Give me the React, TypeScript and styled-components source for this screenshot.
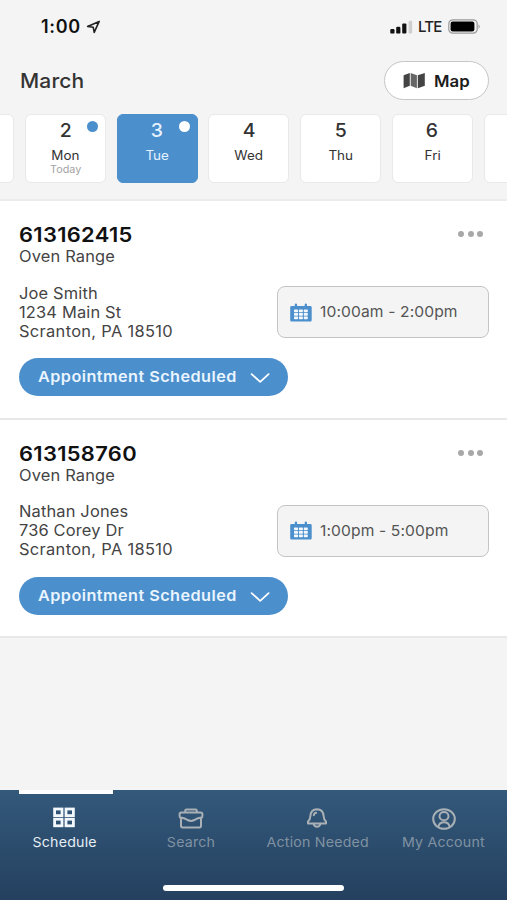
import React from "react";
import styled, { createGlobalStyle } from "styled-components";

const GlobalStyle = createGlobalStyle`
  *, *::before, *::after { box-sizing: border-box; }
  body {
    margin: 0;
    background: #f4f4f4;
    font-family: Inter, "Liberation Sans", sans-serif;
    color: #333;
  }
  button { font: inherit; color: inherit; margin: 0; padding: 0; border: 0; background: none; }
  h1, h2, p, address { margin: 0; font-style: normal; }
  svg { display: block; flex: none; }
`;

const Screen = styled.div`
  display: flex;
  flex-direction: column;
  width: 507px;
  height: 900px;
  overflow: hidden;
  background: #f4f4f4;
`;

const StatusBar = styled.div`
  display: flex;
  align-items: center;
  justify-content: space-between;
  height: 53px;
  padding: 0 26px 0 41px;
`;

const Clock = styled.div`
  display: flex;
  align-items: center;
  gap: 5px;
  font-size: 18px;
  line-height: 22px;
  font-weight: 600;
  letter-spacing: 0.7px;
  color: #111;
`;

const Signals = styled.div`
  display: flex;
  align-items: center;
  font-size: 15px;
  line-height: 20px;
  font-weight: 500;
  letter-spacing: -0.8px;
  color: #222;
`;

const Carrier = styled.span`
  margin: 1px 6.5px 0 5px;
`;

const Header = styled.header`
  display: flex;
  align-items: center;
  justify-content: space-between;
  height: 55px;
  padding: 0 18px 0 20px;
`;

const Month = styled.h1`
  font-size: 20px;
  line-height: 26px;
  font-weight: 500;
  letter-spacing: 0.15px;
  color: #333;
  transform: scaleX(1.05);
  transform-origin: left;
`;

const MapButton = styled.button`
  display: flex;
  align-items: center;
  gap: 8px;
  width: 105px;
  height: 39px;
  padding-left: 18px;
  border: 1px solid #c6c6c6;
  border-radius: 20px;
  background: #fff;
  font-size: 16px;
  line-height: 20px;
  font-weight: 600;
  color: #1c1c1c;
`;

const MapLabel = styled.span`
  transform: scaleX(1.05);
  transform-origin: left;
`;

const StripFrame = styled.div`
  overflow: hidden;
  border-bottom: 2px solid #ececec;
`;

const DayStrip = styled.div`
  display: flex;
  gap: 10.75px;
  width: 700px;
  height: 91px;
  margin-left: -67px;
  padding-top: 6px;
`;

const Day = styled.button<{ $active?: boolean }>`
  position: relative;
  display: flex;
  flex-direction: column;
  align-items: center;
  flex: none;
  width: 81px;
  height: 69px;
  border: 1px solid ${(p) => (p.$active ? "#4b8fcc" : "#e9e9e9")};
  border-radius: 6px;
  background: ${(p) => (p.$active ? "#4b8fcc" : "#fff")};
  color: ${(p) => (p.$active ? "#e6f2ff" : "#333")};
`;

const DayNumber = styled.span`
  margin-top: 3px;
  font-size: 18.5px;
  line-height: 24px;
  font-weight: 500;
  transform: scaleX(1.05);
`;

const DayName = styled.span`
  margin-top: 6px;
  font-size: 12.8px;
  line-height: 16px;
  transform: scaleX(1.05);
`;

const DayNote = styled.span`
  font-size: 10.2px;
  line-height: 10px;
  color: #a3a3a3;
  transform: scaleX(1.06);
`;

const Dot = styled.i<{ $active?: boolean }>`
  position: absolute;
  top: 6px;
  right: 6.5px;
  width: 11px;
  height: 11px;
  border-radius: 50%;
  background: ${(p) => (p.$active ? "#fff" : "#4b8fcc")};
`;

const Job = styled.article`
  display: flex;
  flex-direction: column;
  height: 218.5px;
  padding: 21px 18px 0 19px;
  border-bottom: 2px solid #e8e8e8;
  background: #fff;
`;

const JobTop = styled.div`
  display: flex;
  justify-content: space-between;
`;

const JobId = styled.h2`
  font-size: 20.3px;
  line-height: 26px;
  font-weight: 600;
  letter-spacing: 0.3px;
  color: #111;
  transform: scaleX(1.08);
  transform-origin: left;
`;

const MoreButton = styled.button`
  display: flex;
  align-items: center;
  gap: 3.4px;
  height: 24px;
  margin-right: 6px;
`;

const MoreDot = styled.i`
  width: 6px;
  height: 6px;
  border-radius: 50%;
  background: #a8a8a8;
`;

const Product = styled.p`
  margin-top: -1px;
  font-size: 15.5px;
  line-height: 20px;
  letter-spacing: 0.15px;
  color: #444;
  transform: scaleX(1.06);
  transform-origin: left;
`;

const Details = styled.div`
  display: flex;
  justify-content: space-between;
  align-items: flex-start;
  margin-top: 19px;
`;

const Address = styled.address`
  margin-top: -3px;
  padding-top: 0.5px;
  font-size: 15.5px;
  line-height: 19.2px;
  letter-spacing: 0.15px;
  color: #444;
  transform: scaleX(1.06);
  transform-origin: left;
`;

const CityLine = styled.div`
  letter-spacing: 0.3px;
`;

const TimeBox = styled.div`
  display: flex;
  align-items: center;
  gap: 8px;
  width: 212px;
  height: 52px;
  padding-left: 12px;
  border: 1px solid #c4c4c4;
  border-radius: 8px;
  background: #f4f4f4;
`;

const TimeRange = styled.span`
  font-size: 15px;
  line-height: 20px;
  letter-spacing: 0.12px;
  color: #555;
  transform: scaleX(1.04);
  transform-origin: left;
`;

const StatusButton = styled.button`
  display: flex;
  align-items: center;
  width: 269px;
  height: 38px;
  margin-top: 17px;
  padding-left: 18.5px;
  border-radius: 19px;
  background: #4b8fcc;
  text-align: left;
`;

const StatusLabel = styled.span`
  width: 212.5px;
  font-size: 15px;
  line-height: 20px;
  font-weight: 600;
  letter-spacing: 0.43px;
  color: #eaf5ff;
  transform: scaleX(1.08);
  transform-origin: left;
`;

const TabBar = styled.nav`
  display: flex;
  flex-direction: column;
  justify-content: space-between;
  align-items: center;
  height: 110px;
  margin-top: auto;
  padding-bottom: 9px;
  background: linear-gradient(#33597b, #25405f);
`;

const Tabs = styled.div`
  display: grid;
  grid-template-columns: repeat(4, 1fr);
  width: 100%;
  padding-left: 1px;
`;

const Tab = styled.button<{ $active?: boolean }>`
  display: flex;
  flex-direction: column;
  align-items: center;
  color: ${(p) => (p.$active ? "#f3f8fc" : "#a9b0b6")};
`;

const TabMark = styled.i<{ $active?: boolean }>`
  width: 94px;
  height: 4px;
  margin: 0 0 12px 4px;
  background: ${(p) => (p.$active ? "#fff" : "transparent")};
`;

const TabLabel = styled.span<{ $active?: boolean }>`
  margin-top: 3px;
  font-size: 13.5px;
  line-height: 18px;
  letter-spacing: 0.2px;
  white-space: nowrap;
  color: ${(p) => (p.$active ? "#e6eff6" : "#8092a2")};
  transform: scaleX(1.05);
`;

const HomeBar = styled.div`
  width: 181px;
  height: 6px;
  border-radius: 3px;
  background: #fff;
`;

const LocationIcon = () => (
  <svg width="15" height="14" viewBox="0 0 15 14" fill="none" stroke="#222" strokeWidth="1.6" strokeLinejoin="round">
    <path d="M13.2 1.4 L1.6 6.4 L7.2 7.2 L8.2 12.4 Z" />
  </svg>
);

const SignalIcon = () => (
  <svg width="23" height="14" viewBox="0 0 23 14" fill="#111">
    <rect x="0.3" y="9" width="4.2" height="4.6" rx="1.2" />
    <rect x="6.2" y="6.7" width="4.2" height="6.9" rx="1.2" />
    <rect x="12.2" y="3.5" width="4.2" height="10.1" rx="1" />
    <rect x="18.6" y="0.8" width="3.6" height="12.8" rx="1" fill="#cfcfcf" />
  </svg>
);

const BatteryIcon = () => (
  <svg width="33" height="15" viewBox="0 0 33 15">
    <rect x="0.8" y="0.8" width="28.4" height="13.4" rx="4" fill="none" stroke="#999" strokeWidth="1.2" />
    <rect x="2.6" y="2.6" width="23.8" height="9.8" rx="2.2" fill="#000" />
    <path d="M30.6 5.2 Q32.6 7.5 30.6 9.8 Z" fill="#888" />
  </svg>
);

const MapIcon = () => (
  <svg width="23" height="17" viewBox="0 0 23 17" fill="#444">
    <path d="M0.6 3.2 L6.8 0.9 V13.8 L0.6 16.2 Z" />
    <path d="M7.7 0.9 L13.9 3.2 V16.2 L7.7 13.8 Z" fill="#666" />
    <path d="M14.8 3.2 L21.8 0.9 V13.8 L14.8 16.2 Z" />
  </svg>
);

const CalendarIcon = () => (
  <svg width="22" height="19" viewBox="0 0 22 19">
    <path
      d="M1.6 3 H4.8 V1.4 Q4.8 0.6 5.9 0.6 Q7.1 0.6 7.1 1.4 V3 H14.7 V1.4 Q14.7 0.6 15.8 0.6 Q17 0.6 17 1.4 V3 H20.2 Q21.7 3 21.7 4.2 V17.2 Q21.7 18.4 20.4 18.4 H1.5 Q0.2 18.4 0.2 17.2 V4.2 Q0.2 3 1.6 3 Z"
      fill="#4b8fcc"
    />
    <g fill="#f4f8fc">
      {[6.4, 9.9, 13.4].map((y) =>
        [4, 8.9, 13.8].map((x) => <rect key={`${x}-${y}`} x={x} y={y} width="4" height="2.8" rx="0.6" />)
      )}
    </g>
  </svg>
);

const ChevronIcon = () => (
  <svg width="20" height="12" viewBox="0 0 20 12" fill="none" stroke="#fff" strokeWidth="1.8" strokeLinecap="round" strokeLinejoin="round">
    <path d="M1.6 3.2 L10.2 10.8 L18.6 3.2" />
  </svg>
);

const GridIcon = () => (
  <svg width="24" height="24" viewBox="0 0 24 24" fill="none" stroke="currentColor" strokeWidth="2.8">
    <rect x="2.6" y="3" width="7.4" height="6.6" />
    <rect x="14" y="3" width="7.4" height="6.6" />
    <rect x="2.6" y="13.2" width="7.4" height="6.6" />
    <rect x="14" y="13.2" width="7.4" height="6.6" />
  </svg>
);

const BriefcaseIcon = () => (
  <svg width="26" height="24" viewBox="0 0 26 24" fill="none" stroke="currentColor" strokeWidth="2" strokeLinejoin="round">
    <path d="M7.2 6.4 V4.7 Q7.2 3.4 8.5 3.4 H17.5 Q18.8 3.4 18.8 4.7 V6.4" />
    <path d="M3 12.2 Q1.6 11.6 1.6 10 V8.4 Q1.6 6.6 3.4 6.6 H22.6 Q24.4 6.6 24.4 8.4 V10 Q24.4 11.6 23 12.2" />
    <path d="M3 11.6 V19.8 Q3 21.4 4.6 21.4 H21.4 Q23 21.4 23 19.8 V11.6" />
    <path d="M3 11.4 Q7 12 9.6 14 Q13 15.8 16.4 14 Q19 12 23 11.4" />
  </svg>
);

const BellIcon = () => (
  <svg width="24" height="24" viewBox="0 0 24 24" fill="none" stroke="currentColor" strokeWidth="2" strokeLinecap="round" strokeLinejoin="round">
    <path d="M5.4 10 Q5.8 3.4 12 3.2 Q18.2 3.4 18.6 10 Q18.8 13.6 21 15.6 V17.4 H3 V15.6 Q5.2 13.6 5.4 10 Z" />
    <path d="M8.6 17.8 Q9.4 20.8 12 20.8 Q14.6 20.8 15.4 17.8" />
    <path d="M8.8 9.2 Q9.1 7 11.2 6.8" />
  </svg>
);

const AccountIcon = () => (
  <svg width="26" height="24" viewBox="0 0 26 24" fill="none" stroke="currentColor" strokeWidth="2">
    <ellipse cx="13" cy="13" rx="10.8" ry="9.8" />
    <ellipse cx="13" cy="10.2" rx="4.5" ry="4.1" />
    <path d="M7.4 20.8 Q8.2 16.2 13 16.2 Q17.8 16.2 18.6 20.8" />
  </svg>
);

type DayInfo = { num?: string; name?: string; note?: string; dot?: boolean; active?: boolean };

const days: DayInfo[] = [
  {},
  { num: "2", name: "Mon", note: "Today", dot: true },
  { num: "3", name: "Tue", dot: true, active: true },
  { num: "4", name: "Wed" },
  { num: "5", name: "Thu" },
  { num: "6", name: "Fri" },
  {},
];

const jobs = [
  { id: "613162415", customer: "Joe Smith", street: "1234 Main St", city: "Scranton, PA 18510", time: "10:00am - 2:00pm" },
  { id: "613158760", customer: "Nathan Jones", street: "736 Corey Dr", city: "Scranton, PA 18510", time: "1:00pm - 5:00pm" },
];

const tabs = [
  { label: "Schedule", Icon: GridIcon, active: true },
  { label: "Search", Icon: BriefcaseIcon, active: false },
  { label: "Action Needed", Icon: BellIcon, active: false },
  { label: "My Account", Icon: AccountIcon, active: false },
];

export default function App() {
  return (
    <>
      <GlobalStyle />
      <Screen>
        <StatusBar>
          <Clock>
            1:00
            <LocationIcon />
          </Clock>
          <Signals>
            <SignalIcon />
            <Carrier>LTE</Carrier>
            <BatteryIcon />
          </Signals>
        </StatusBar>
        <Header>
          <Month>March</Month>
          <MapButton>
            <MapIcon />
            <MapLabel>Map</MapLabel>
          </MapButton>
        </Header>
        <StripFrame>
          <DayStrip>
            {days.map((d, i) => (
              <Day key={i} $active={d.active}>
                {d.num && <DayNumber>{d.num}</DayNumber>}
                {d.name && <DayName>{d.name}</DayName>}
                {d.note && <DayNote>{d.note}</DayNote>}
                {d.dot && <Dot $active={d.active} />}
              </Day>
            ))}
          </DayStrip>
        </StripFrame>
        {jobs.map((j) => (
          <Job key={j.id}>
            <JobTop>
              <JobId>{j.id}</JobId>
              <MoreButton aria-label="More">
                <MoreDot />
                <MoreDot />
                <MoreDot />
              </MoreButton>
            </JobTop>
            <Product>Oven Range</Product>
            <Details>
              <Address>
                <div>{j.customer}</div>
                <div>{j.street}</div>
                <CityLine>{j.city}</CityLine>
              </Address>
              <TimeBox>
                <CalendarIcon />
                <TimeRange>{j.time}</TimeRange>
              </TimeBox>
            </Details>
            <StatusButton>
              <StatusLabel>Appointment Scheduled</StatusLabel>
              <ChevronIcon />
            </StatusButton>
          </Job>
        ))}
        <TabBar>
          <Tabs>
            {tabs.map(({ label, Icon, active }) => (
              <Tab key={label} $active={active}>
                <TabMark $active={active} />
                <Icon />
                <TabLabel $active={active}>{label}</TabLabel>
              </Tab>
            ))}
          </Tabs>
          <HomeBar />
        </TabBar>
      </Screen>
    </>
  );
}
